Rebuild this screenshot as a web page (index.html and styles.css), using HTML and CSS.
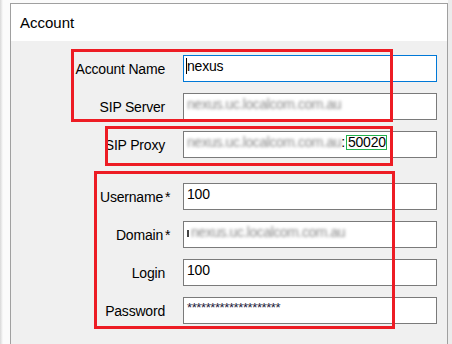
FILE: index.html
```html
<!DOCTYPE html>
<html lang="en">
<head>
	<meta charset="UTF-8">
	<title>Account</title>
	<link rel="stylesheet" href="styles.css">
</head>
<body>
	<div class="screen">
		<div class="window">
			<div class="window-title">Account</div>
			<div class="content">
				<div class="row">
					<div class="label">Account Name</div>
					<div class="field focused"><span class="caret"></span>nexus</div>
				</div>
				<div class="row">
					<div class="label">SIP Server</div>
					<div class="field"><span class="hidden-text">nexus.uc.localcom.com.au</span></div>
				</div>
				<div class="row">
					<div class="label">SIP Proxy</div>
					<div class="field"><span class="hidden-text">nexus.uc.localcom.com.au</span>:<span class="port">50020</span></div>
				</div>

				<div class="row sep">
					<div class="label">Username<span class="req">*</span></div>
					<div class="field">100</div>
				</div>
				<div class="row">
					<div class="label">Domain<span class="req">*</span></div>
					<div class="field"><span class="tick"></span><span class="hidden-text">nexus.uc.localcom.com.au</span></div>
				</div>
				<div class="row">
					<div class="label">Login</div>
					<div class="field">100</div>
				</div>
				<div class="row">
					<div class="label">Password</div>
					<div class="field"><span class="stars">********************</span></div>
				</div>

				<!-- red annotation frames drawn over the form -->
				<div class="mark mark-server"></div>
				<div class="mark mark-proxy"></div>
				<div class="mark mark-user"></div>
			</div>
		</div>
	</div>
</body>
</html>
```

FILE: styles.css
```css
	body {
		margin: 0;
		font-family: 'Liberation Sans', Arial, sans-serif;
		background: linear-gradient(to right, #d8d8d8 0, #fbfbfb 3px, #fbfbfb 448px, #ececec 448px);
		overflow: hidden;}

	.screen {
		height: 344px;
		padding: 3px 0 0 10px;
		box-sizing: border-box;}

	.window {
		width: 438px;
		height: 341px;
		box-sizing: border-box;
		border: 1px solid #a0a0a0;
		border-bottom: none;
		background-color: #f0f0f0;}

	.window-title {
		height: 37px;
		line-height: 37px;
		padding-left: 9px;
		background-color: #fff;
		font-size: 15px;
		color: #000;}

	.content {
		position: relative;
		padding-top: 14px;}

	.row {
		display: flex;
		align-items: center;
		height: 27px;
		margin-bottom: 11px;}
	.row.sep {
		margin-top: 25px;}

	.label {
		width: 154px;
		margin-right: 18px;
		text-align: right;
		font-size: 14px;
		letter-spacing: -0.2px;
		color: #000;
		white-space: nowrap;}
	.req {
		display: inline-block;
		width: 0;
		padding-left: 2px;
		overflow: visible;}

	.field {
		width: 254px;
		height: 27px;
		box-sizing: border-box;
		border: 1px solid #7a7a7a;
		background-color: #fff;
		padding: 1px 3px;
		font-size: 14px;
		line-height: 18px;
		letter-spacing: -0.2px;
		color: #000;
		white-space: nowrap;
		overflow: hidden;}
	.field.focused {
		border-color: #0078d7;}

	.caret {
		display: inline-block;
		width: 0;
		height: 16px;
		border-left: 1px solid #000;
		vertical-align: -3px;
		margin-left: -1px;}

	.tick {
		display: inline-block;
		width: 0;
		height: 7px;
		border-left: 2px solid #444;
		margin-right: 2px;
		vertical-align: 0;}

	.hidden-text {
		color: #8c8c8c;
		letter-spacing: -0.45px;
		filter: blur(1.4px);}

	.port {
		display: inline-block;
		border: 1px solid #22b14c;
		line-height: 13px;
		padding: 0 0 0 1px;
		margin-left: 1px;}

	.stars {
		font-size: 13px;
		letter-spacing: -0.4px;
		color: #1b1b3a;
		vertical-align: 2px;}

	.mark {
		position: absolute;
		box-sizing: border-box;
		border: 3px solid #ed1c24;}
	.mark-server {
		left: 60px;
		top: 8px;
		width: 322px;
		height: 73px;}
	.mark-proxy {
		left: 94px;
		top: 85px;
		width: 288px;
		height: 40px;}
	.mark-user {
		left: 83px;
		top: 130px;
		width: 301px;
		height: 158px;}
```
